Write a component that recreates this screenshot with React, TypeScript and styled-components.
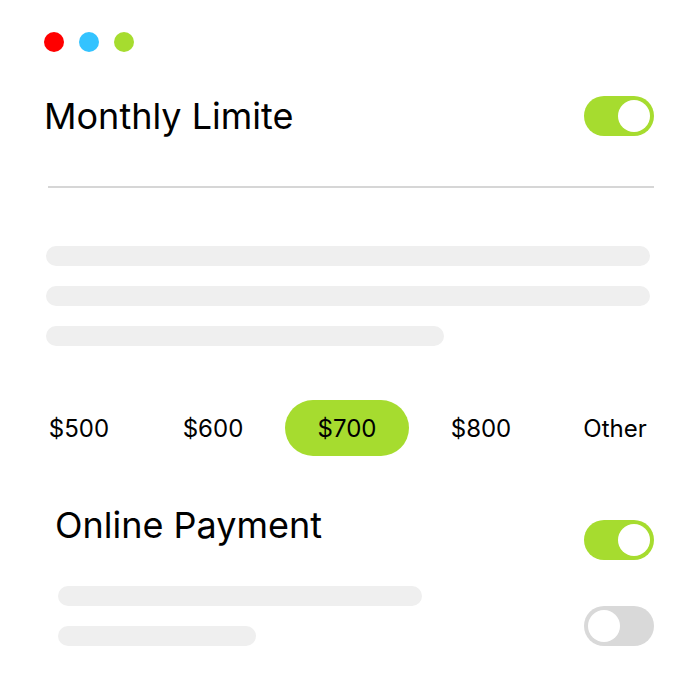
import React from "react";
import styled, { createGlobalStyle } from "styled-components";

const Global = createGlobalStyle`
  html, body { margin: 0; padding: 0; background: #ffffff; }
  body { font-family: Inter, "Noto Sans", sans-serif; color: #000; }
`;

const Page = styled.div`
  width: 692px;
  height: 698px;
  box-sizing: border-box;
  padding: 32px 38px 0 44px;
  display: flex;
  flex-direction: column;
`;

const Dots = styled.div`
  display: flex;
  gap: 15px;
`;

const Dot = styled.span<{ $c: string }>`
  width: 20px;
  height: 20px;
  border-radius: 50%;
  background: ${(p) => p.$c};
`;

const HeaderRow = styled.div<{ $top: number; $indent: number; $align: string }>`
  margin-top: ${(p) => p.$top}px;
  padding-left: ${(p) => p.$indent}px;
  display: flex;
  align-items: ${(p) => p.$align};
  justify-content: space-between;
`;

const Title = styled.h1`
  margin: 0;
  font-size: 36px;
  font-weight: 400;
  line-height: 40px;
  letter-spacing: 0;
`;

const Track = styled.div<{ $on: boolean; $offset: number }>`
  margin-top: ${(p) => p.$offset}px;
  width: 70px;
  height: 40px;
  border-radius: 20px;
  box-sizing: border-box;
  padding: 4px;
  display: flex;
  justify-content: ${(p) => (p.$on ? "flex-end" : "flex-start")};
  background: ${(p) => (p.$on ? "#a6dc2f" : "#d9d9d9")};
`;

const Knob = styled.span`
  width: 32px;
  height: 32px;
  border-radius: 50%;
  background: #fff;
`;

const Divider = styled.hr`
  margin: 50px 0 0 4px;
  border: none;
  height: 2px;
  background: #d6d6d6;
`;

const Lines = styled.div<{ $top: number; $indent: number }>`
  margin-top: ${(p) => p.$top}px;
  padding-left: ${(p) => p.$indent}px;
  display: flex;
  flex-direction: column;
  gap: 20px;
`;

const Line = styled.div<{ $w: number }>`
  width: ${(p) => p.$w}px;
  height: 20px;
  border-radius: 10px;
  background: #efefef;
`;

const Amounts = styled.div`
  margin: 54px 0 0 -27px;
  display: grid;
  grid-template-columns: repeat(5, 124px);
  column-gap: 10px;
`;

const Amount = styled.button<{ $active?: boolean }>`
  height: 56px;
  border: none;
  border-radius: 28px;
  padding: 0;
  font-family: Inter, "Noto Sans", sans-serif;
  font-size: 24px;
  color: #000;
  cursor: pointer;
  background: ${(p) => (p.$active ? "#a6dc2f" : "transparent")};
`;

const SubBlock = styled.div`
  margin-top: 26px;
  display: flex;
  align-items: flex-end;
  justify-content: space-between;
`;

function Toggle({ on, offset = 0 }: { on: boolean; offset?: number }) {
  return (
    <Track $on={on} $offset={offset}>
      <Knob />
    </Track>
  );
}

export default function App() {
  const amounts = ["$500", "$600", "$700", "$800", "Other"];
  return (
    <>
      <Global />
      <Page>
        <Dots>
          <Dot $c="#ff0000" />
          <Dot $c="#33c3ff" />
          <Dot $c="#a6dc2f" />
        </Dots>
        <HeaderRow $top={44} $indent={0} $align="center">
          <Title>Monthly Limite</Title>
          <Toggle on />
        </HeaderRow>
        <Divider />
        <Lines $top={58} $indent={2}>
          <Line $w={604} />
          <Line $w={604} />
          <Line $w={398} />
        </Lines>
        <Amounts>
          {amounts.map((a) => (
            <Amount key={a} $active={a === "$700"}>
              {a}
            </Amount>
          ))}
        </Amounts>
        <HeaderRow $top={49} $indent={11} $align="flex-start">
          <Title>Online Payment</Title>
          <Toggle on offset={15} />
        </HeaderRow>
        <SubBlock>
          <Lines $top={0} $indent={14}>
            <Line $w={364} />
            <Line $w={198} />
          </Lines>
          <Toggle on={false} />
        </SubBlock>
      </Page>
    </>
  );
}
